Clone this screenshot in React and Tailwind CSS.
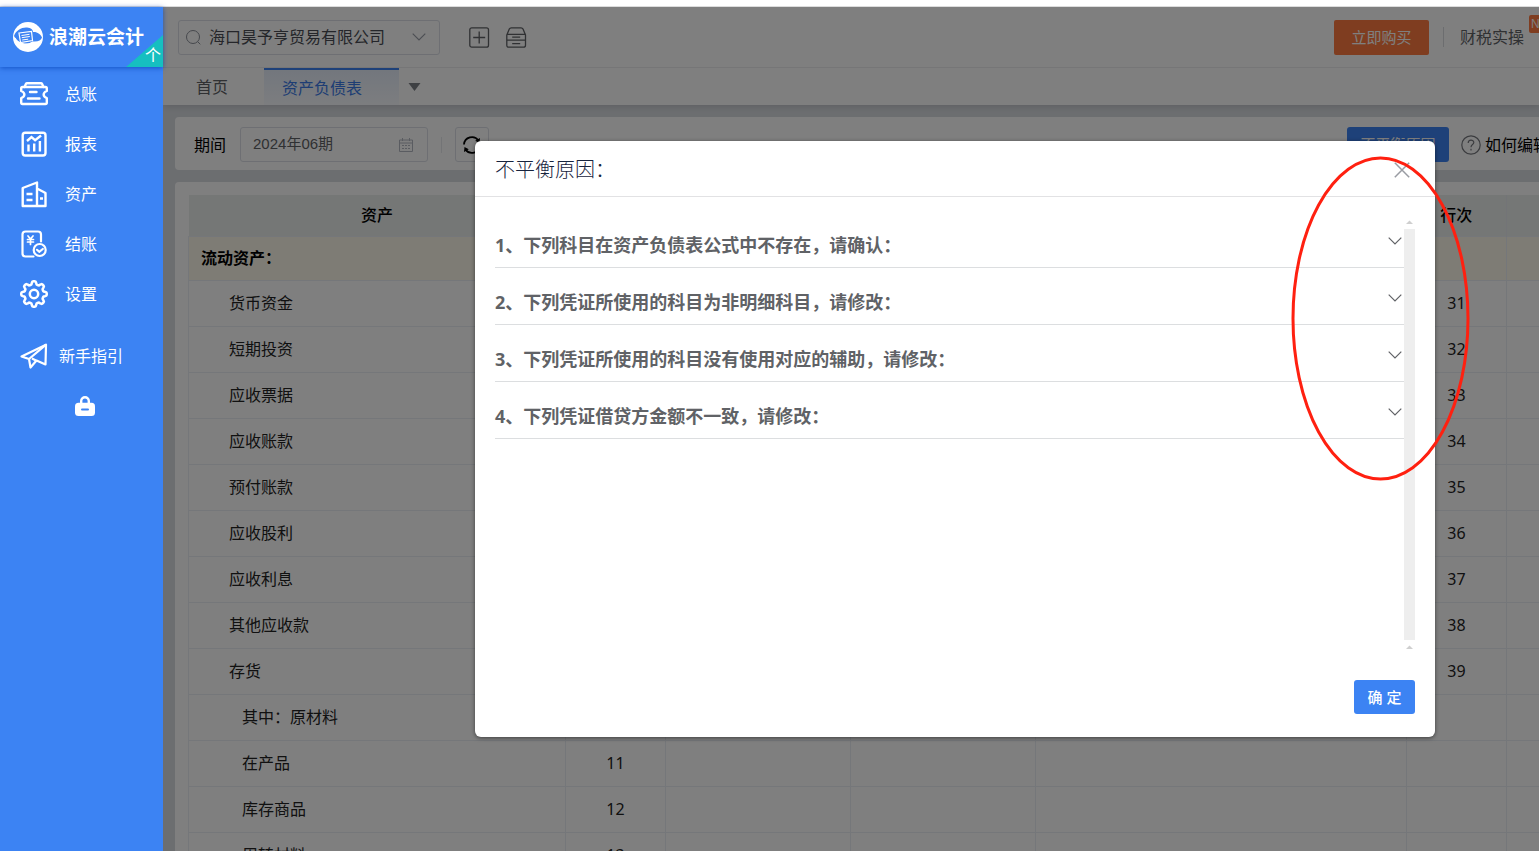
import { useState } from 'react'

const menu = [
  { label: '总账', icon: LedgerIcon },
  { label: '报表', icon: ReportIcon },
  { label: '资产', icon: AssetIcon },
  { label: '结账', icon: CheckoutIcon },
  { label: '设置', icon: GearIcon },
]

const rows = [
  { name: '货币资金', right: 31 },
  { name: '短期投资', right: 32 },
  { name: '应收票据', right: 33 },
  { name: '应收账款', right: 34 },
  { name: '预付账款', right: 35 },
  { name: '应收股利', right: 36 },
  { name: '应收利息', right: 37 },
  { name: '其他应收款', right: 38 },
  { name: '存货', right: 39 },
  { name: '其中：原材料', sub: true },
  { name: '在产品', sub: true, left: 11 },
  { name: '库存商品', sub: true, left: 12 },
  { name: '周转材料', sub: true, left: 13 },
]

const reasons = [
  '1、下列科目在资产负债表公式中不存在，请确认：',
  '2、下列凭证所使用的科目为非明细科目，请修改：',
  '3、下列凭证所使用的科目没有使用对应的辅助，请修改：',
  '4、下列凭证借贷方金额不一致，请修改：',
]

// Eight-tooth gear outline around (14, 14)
const gearPath = Array.from({ length: 96 }, (_, i) => {
  const a = (i / 96) * Math.PI * 2
  const r = 11.2 + 1.6 * Math.tanh(2.2 * Math.cos(8 * a))
  return `${i ? 'L' : 'M'}${(14 + r * Math.cos(a)).toFixed(2)} ${(14 + r * Math.sin(a)).toFixed(2)}`
}).join('') + 'Z'

function LedgerIcon() {
  return (
    <svg className="w-7 h-6" viewBox="0 0 28 24" fill="none" stroke="currentColor" strokeWidth="2.400" strokeLinecap="round" strokeLinejoin="round">
      <path d="M4.500 5 6 1.800Q6.300 1.200 7 1.200h14q.7 0 1 .6L23.500 5" />
      <path d="M2.500 5h23q1.300 0 1.300 1.500V9c-4.200 1.600-4.200 5.600 0 7.200v4.300q0 1.500-1.300 1.500h-23q-1.300 0-1.300-1.500v-4.300c4.200-1.600 4.200-5.600 0-7.200V6.500Q1.200 5 2.500 5Z" />
      <path d="M10 10h6.500M8 16.500h11.500" />
    </svg>
  )
}

function ReportIcon() {
  return (
    <svg className="w-7 h-7" viewBox="-1.500 -1.500 28 28" fill="none" stroke="currentColor" strokeWidth="2.400">
      <rect x="1.200" y="1.200" width="22.800" height="22.800" rx="2.500" />
      <path d="M5.500 9.500 10 5.600l3.600 3L19.600 4" />
      <path d="M7 13v7M12.700 12v8M18.400 9.500V20" />
    </svg>
  )
}

function AssetIcon() {
  return (
    <svg className="w-7 h-7" viewBox="-1.500 -1 28 28" fill="none" stroke="currentColor" strokeWidth="2.400" strokeLinejoin="round">
      <path d="M1.200 25V7l14.300-5.500V25ZM15.500 7.500 24 12v13h-8.500" />
      <path d="M5 13h6M5 19h6M18.500 17.500h3" />
    </svg>
  )
}

function CheckoutIcon() {
  return (
    <svg className="w-7 h-7" viewBox="-1.500 -.500 28 28" fill="none" stroke="currentColor" strokeWidth="2.200" strokeLinecap="round" strokeLinejoin="round">
      <path d="M12 26H4q-3 0-3-3V4q0-3 3-3h12.500q3 0 3 3v7" />
      <path d="m6.500 5.500 2.500 3 2.500-3M9 8.500V14M6 9h6M6 11.500h6" strokeWidth="1.700" />
      <circle cx="18.200" cy="19.500" r="6" />
      <path d="m15.500 19.300 2.200 2 3.600-2.800" />
    </svg>
  )
}

function GearIcon() {
  return (
    <svg className="w-7 h-7" viewBox="0 0 28 28" fill="none" stroke="currentColor" strokeWidth="2.500" strokeLinejoin="round">
      <path d={gearPath} />
      <circle cx="14" cy="14" r="4.200" />
    </svg>
  )
}

function PlaneIcon() {
  return (
    <svg className="w-7 h-7" viewBox="-.500 -1.500 28 28" fill="none" stroke="currentColor" strokeWidth="2.200" strokeLinejoin="round">
      <path d="M1 13 25.500 1.200 25 21l-9-4-6 7-1.500-8.500Z" />
      <path d="M25.500 1.200 8.500 15.500M15.500 17l-4-2" />
    </svg>
  )
}

function Chevron({ className }) {
  return (
    <svg className={className} viewBox="0 0 14 8" fill="none" stroke="currentColor" strokeWidth="1.200">
      <path d="M.7.700 7 7 13.300.700" />
    </svg>
  )
}

function Sidebar() {
  return (
    <aside className="relative z-20 w-[163px] shrink-0 bg-[#3c83f3] text-white">
      <div className="relative flex h-[60px] items-center pl-[13px] shadow-[0_1px_5px_rgba(0,60,180,0.7)]">
        <svg className="size-[30px] shrink-0" viewBox="0 0 30 30">
          <circle cx="15" cy="15" r="15" fill="#fff" />
          <path d="M1 14C3 8 9 5 14 5.500c4 .3 6 2.500 6 4.500 4-.5 8 2.500 9 5.500-1 3-4 4.500-9 4-5 3.500-15 3-19-5.500Z" fill="#3c83f3" />
          <path d="M6 11 18.500 9.500 19.500 18.500 7.500 20.500ZM2 16c3 7 13 8 18 4" fill="none" stroke="#fff" strokeWidth="1.200" />
          <path d="m8.500 13.500 8-1.200M8.800 15.700l8-1.200M9.200 18l6-.8" stroke="#fff" />
        </svg>
        <h1 className="ml-[6px] text-[19px] leading-6 font-bold">浪潮云会计</h1>
        <div className="absolute right-0 bottom-0 h-8 w-[37px] bg-[#16bfc0] [clip-path:polygon(100%_0,100%_100%,0_100%)]" />
        <span className="absolute right-[2px] bottom-0 text-base leading-6">个</span>
      </div>
      <nav className="pt-[2px]">
        {menu.map(({ label, icon: Icon }) => (
          <a key={label} href="#" className="flex h-[50px] items-center gap-[17px] pl-5 text-base">
            <Icon />
            {label}
          </a>
        ))}
        <a href="#" className="mt-3 flex h-[50px] items-center gap-[11px] pl-5 text-base">
          <PlaneIcon />
          新手指引
        </a>
        <button className="mt-[15px] ml-[75px] block" aria-label="锁定">
          <svg className="size-5" viewBox="0 0 20 20" fill="none">
            <path d="M6.200 8V5a3.800 3.800 0 0 1 7.600 0V8" stroke="currentColor" strokeWidth="2.400" />
            <rect y="6.700" width="20" height="13.300" rx="3.500" fill="currentColor" />
            <path d="M7 13.600h6" stroke="#3c83f3" strokeWidth="2" strokeLinecap="round" />
          </svg>
        </button>
      </nav>
    </aside>
  )
}

function Header() {
  return (
    <header className="relative bg-white text-[#606266] shadow-[0_2px_6px_rgba(0,0,0,0.12)]">
      <div className="flex h-[61px] items-center border-b border-[#ececef] pl-[15px]">
        <div className="relative flex h-[35px] w-[262px] shrink-0 items-center rounded-[3px] border border-[#dcdfe6]">
          <svg className="absolute left-[7px] size-4 text-[#8c9099]" viewBox="0 0 16 16" fill="none" stroke="currentColor">
            <circle cx="7" cy="8" r="6.500" />
            <path d="m11.700 12.700 2.600 2.600" />
          </svg>
          <select aria-label="公司" className="h-full w-full appearance-none pl-[30px] text-base text-[#4a4d54]">
            <option>海口昊予亨贸易有限公司</option>
          </select>
          <Chevron className="pointer-events-none absolute right-[13px] h-2 w-[14px] text-[#9a9ea8]" />
        </div>
        <button className="ml-[29px]" aria-label="新增">
          <svg className="size-[21px]" viewBox="0 0 21 21" fill="none" stroke="currentColor" strokeWidth="1.300">
            <rect x=".800" y=".800" width="18.700" height="19.400" rx="2" />
            <path d="M10.200 4.500v12M4.200 10.500h12" />
          </svg>
        </button>
        <button className="ml-4" aria-label="归档">
          <svg className="size-[21px]" viewBox="0 0 21 21" fill="none" stroke="currentColor" strokeWidth="1.300">
            <path d="M.800 8 3.300 2q.5-1.200 2-1.200h9.700q1.500 0 2 1.200L19.500 8v10.200q0 2-2 2H2.800q-2 0-2-2ZM.800 13.200h18.700M1 7.300h18.300M6.200 10.200h8M6.200 16.600h8" />
          </svg>
        </button>
        <div className="ml-auto flex w-[205px] shrink-0 items-center whitespace-nowrap">
          <button className="h-[35px] w-[95px] shrink-0 rounded-[2px] bg-[#ff7b40] text-[15px] text-white">立即购买</button>
          <span className="ml-[14px] h-5 w-px shrink-0 bg-[#d8dade]" />
          <a href="#" className="relative ml-4 text-base">
            财税实操
            <span className="absolute -top-[10px] left-[69px] rounded-[2px] bg-[#ff7b40] px-[2px] font-[Liberation_Sans] text-xs leading-[18px] text-white">NEW</span>
          </a>
        </div>
      </div>
      <div className="flex h-[37px] items-center text-base">
        <a href="#" className="pl-[33px] pr-9">首页</a>
        <a href="#" className="flex h-full w-[135px] items-center border-t-2 border-[#3c83f3] bg-gradient-to-b from-[#e6eefb] to-[#f9fbff] pl-[18px] text-[#3c7be8]">资产负债表</a>
        <button className="ml-[9px] text-[#7d8087]" aria-label="更多标签">
          <svg className="h-2 w-[13px]" viewBox="0 0 13 8" fill="currentColor"><path d="M.500 0h12L6.500 8Z" /></svg>
        </button>
      </div>
    </header>
  )
}

function Toolbar({ onReason }) {
  return (
    <section className="flex h-[53px] items-center rounded-l-[4px] bg-white pt-[2px] pl-[19px] text-base text-black">
      <label htmlFor="period">期间</label>
      <div className="relative ml-[14px] flex h-[35px] w-[188px] items-center rounded-[3px] border border-[#dcdfe6]">
        <input id="period" defaultValue="2024年06期" className="w-full pl-3 font-['Liberation_Sans','Noto_Sans_CJK_SC',sans-serif] text-[15px] text-[#606266]" />
        <svg className="absolute right-[14px] size-[14px] text-[#b4b8c2]" viewBox="0 0 14 14" fill="none" stroke="currentColor">
          <path d="M.500 2h13v11.500H.500ZM.500 5h13M3.500 0v3M10.500 0v3M3 7.500h2M6 7.500h2M9 7.500h2M3 10.500h2M6 10.500h2M9 10.500h2" />
        </svg>
      </div>
      <span className="ml-[13px] h-4 w-px bg-[#e6e8ec]" />
      <button aria-label="刷新" className="ml-[13px] flex h-[35px] w-[34px] items-center justify-center rounded-[3px] border border-[#dcdfe6]">
        <svg className="size-5" viewBox="0 0 20 20" fill="none" stroke="currentColor" strokeWidth="1.800">
          <path d="M2 9.500A8 8 0 0 1 16.500 5.500M18 10.500A8 8 0 0 1 3.500 14.500" />
          <path d="m18 3-.5 5-4.300-2.200ZM2 17l.500-5 4.300 2.200Z" fill="currentColor" stroke="none" />
        </svg>
      </button>
      <div className="ml-auto flex w-48 shrink-0 items-center whitespace-nowrap">
        <button onClick={onReason} className="h-[35px] w-[102px] shrink-0 rounded-[3px] bg-[#3c83f3] text-[15px] text-white">不平衡原因</button>
        <a href="#" className="ml-3 flex items-center gap-1">
          <svg className="size-5 shrink-0 text-[#77797f]" viewBox="0 0 20 20" fill="none" stroke="currentColor" strokeWidth="1.200">
            <circle cx="10" cy="10" r="9.200" />
            <path d="M7.200 8c0-4 5.600-3.600 5.600-.500 0 2-2.800 2.200-2.800 4.700M10 13.800v1.600" />
          </svg>
          如何编辑
        </a>
      </div>
    </section>
  )
}

function BalanceTable() {
  const cell = 'border border-[#ebeef5]'
  return (
    <section className="mt-3 rounded-tl-[4px] bg-white pt-[13px] pl-[13px]">
      <table className="w-[1503px] table-fixed border-collapse text-base text-[#222]">
        <colgroup>
          <col className="w-[377px]" />
          <col className="w-[100px]" />
          <col className="w-[185px]" />
          <col className="w-[185px]" />
          <col className="w-[371px]" />
          <col className="w-[100px]" />
          <col className="w-[185px]" />
        </colgroup>
        <thead>
          <tr className="h-[41px] bg-[#ebeeed] text-black">
            <th className="font-medium">资产</th>
            <th />
            <th />
            <th />
            <th />
            <th className="font-medium">行次</th>
            <th className="border-l border-[#e6e9ee]" />
          </tr>
        </thead>
        <tbody>
          <tr className="h-11 bg-[#fcf8ea] text-black">
            <td className={`${cell} pl-3 font-bold`}>流动资产：</td>
            {[1, 2, 3, 4, 5, 6].map((n) => <td key={n} className={cell} />)}
          </tr>
          {rows.map((r) => (
            <tr key={r.name} className="h-[46px]">
              <td className={`${cell} ${r.sub ? 'pl-[53px]' : 'pl-10'}`}>{r.name}</td>
              <td className={`${cell} text-center`}>{r.left}</td>
              <td className={cell} />
              <td className={cell} />
              <td className={cell} />
              <td className={`${cell} text-center`}>{r.right}</td>
              <td className={cell} />
            </tr>
          ))}
        </tbody>
      </table>
    </section>
  )
}

function ReasonDialog({ onClose }) {
  const [active, setActive] = useState(null)

  return (
    <div className="absolute inset-0 z-10 flex items-start justify-end bg-black/50 pt-[134px] pr-[104px]">
      <div role="dialog" aria-labelledby="reason-title" className="w-[960px] rounded-[6px] bg-white shadow-[0_1px_4px_rgba(0,0,0,0.5)]">
        <div className="flex h-14 items-center justify-between border-b border-[#e2e2e4] pt-[2px] pr-[25px] pl-5">
          <h2 id="reason-title" className="text-xl font-light text-[#17233d]">不平衡原因：</h2>
          <button onClick={onClose} aria-label="关闭" className="text-[#999ca3]">
            <svg className="size-4" viewBox="0 0 16 16" fill="none" stroke="currentColor" strokeWidth="1.500"><path d="m.800.800 14.400 14.400M15.200.800.800 15.200" /></svg>
          </button>
        </div>
        <div className="flex h-[455px] px-5">
          <ul className="flex-1 pt-[14px]">
            {reasons.map((text, i) => (
              <li key={text} className="border-b border-[#dcdee0]">
                <button
                  onClick={() => setActive(active === i ? null : i)}
                  aria-expanded={active === i}
                  className="flex h-14 w-full items-end justify-between pr-[2px] pb-[10px] text-left text-[18px] leading-6 font-bold text-[#606266]"
                >
                  {text}
                  <Chevron className={`mb-3 h-2 w-[14px] ${active === i ? 'rotate-180' : ''}`} />
                </button>
              </li>
            ))}
          </ul>
          <div className="flex w-[11px] flex-col items-center gap-[5px] pt-[23px] pb-[3px] text-[#cfcfcf]">
            <svg className="h-1 w-[7px]" viewBox="0 0 7 4" fill="currentColor"><path d="M0 4 3.500.500 7 4Z" /></svg>
            <div className="w-full flex-1 bg-[#eee]" />
            <svg className="h-1 w-[7px]" viewBox="0 0 7 4" fill="currentColor"><path d="M0 4 3.500.500 7 4Z" /></svg>
          </div>
        </div>
        <div className="flex justify-end px-5 pt-7 pb-[23px]">
          <button onClick={onClose} className="h-[34px] w-[61px] rounded-[3px] bg-[#3c83f3] text-[15px] font-medium text-white">确 定</button>
        </div>
      </div>
    </div>
  )
}

export default function App() {
  const [open, setOpen] = useState(true)

  return (
    <div className="flex h-screen flex-col overflow-hidden bg-white font-['Noto_Sans','Noto_Sans_CJK_SC',sans-serif]">
      <div className="h-[7px] shrink-0 border-b border-[#dcdcdc]" />
      <div className="relative flex min-h-0 flex-1">
        <Sidebar />
        <main className="relative min-w-0 flex-1 overflow-hidden bg-[#d9dce1]">
          <Header />
          <div className="pt-3 pl-3">
            <Toolbar onReason={() => setOpen(true)} />
            <BalanceTable />
          </div>
          {open && <ReasonDialog onClose={() => setOpen(false)} />}
        </main>
        {/* Hand-drawn highlight around the expand arrows */}
        <svg className="pointer-events-none absolute top-[149px] right-[69px] z-30 h-[325px] w-[180px]" viewBox="0 0 180 325" fill="none">
          <ellipse cx="90.500" cy="162.500" rx="87.500" ry="160.500" stroke="#ff2010" strokeWidth="3" />
        </svg>
      </div>
    </div>
  )
}
